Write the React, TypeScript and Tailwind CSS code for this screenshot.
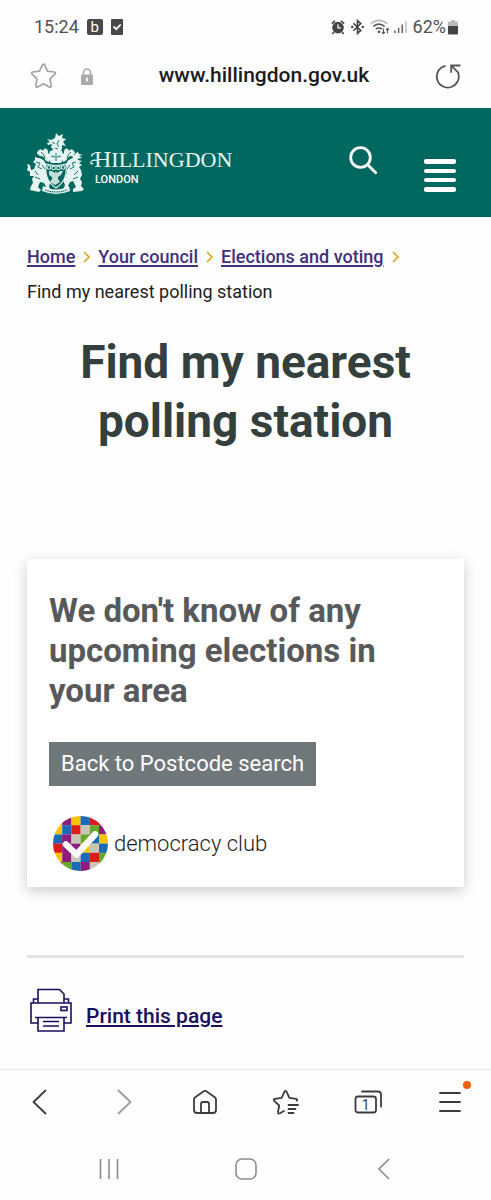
const breadcrumbs = ['Home', 'Your council', 'Elections and voting'];

const mosaic = [
  ['#f8c300', '#8e1b7e', '#f8c300', '#1b6ab8', '#dc1b1b', '#dc1b1b'],
  ['#f8c300', '#1b6ab8', '#dc1b1b', '#c9c6b6', '#6aa82c', '#8e1b7e'],
  ['#1b6ab8', '#8e1b7e', '#c9c6b6', '#6aa82c', '#1b6ab8', '#f8c300'],
  ['#dc1b1b', '#8e1b7e', '#8e1b7e', '#f8c300', '#c9c6b6', '#1b6ab8'],
  ['#f8c300', '#8e1b7e', '#c9c6b6', '#1b6ab8', '#dc1b1b', '#6aa82c'],
  ['#8e1b7e', '#6aa82c', '#1b6ab8', '#8e1b7e', '#c9c6b6', '#6aa82c'],
];

function StatusBar() {
  return (
    <div className="flex h-[54px] items-center justify-between pl-[34px] pr-[33px] text-[#505050]">
      <div className="flex items-center gap-2">
        <span className="text-[18px] leading-6">15:24</span>
        <span className="flex h-4 w-4 items-center justify-center rounded-xs bg-[#484848] text-[15px] leading-4 text-white">b</span>
        <svg width="12" height="16" viewBox="0 0 12 16" aria-hidden="true">
          <rect width="12" height="16" rx="1" fill="#484848" />
          <path d="M2.5 7.5l2.7 2.7L9.7 5.5" fill="none" stroke="#fff" strokeWidth="1.8" />
        </svg>
      </div>
      <div className="flex items-center">
        <svg className="mr-1.5" width="14" height="15" viewBox="0 0 14 15" aria-hidden="true">
          <path d="M.8 3.6L4 .9M13.2 3.6L10 .9M3 12l-1.8 2M11 12l1.8 2" stroke="#444" strokeWidth="1.6" />
          <circle cx="7" cy="7.6" r="5.8" fill="#444" />
          <path d="M7 4.3v3.6h2.8" fill="none" stroke="#fff" strokeWidth="1.2" />
        </svg>
        <svg className="mr-1.5" width="13" height="16" viewBox="0 0 13 16" aria-hidden="true">
          <path d="M2.4 4.2l7.4 7.2-3.3 3V1.6l3.3 3-7.4 7.2" fill="none" stroke="#444" strokeWidth="1.6" />
          <circle cx="1.2" cy="8" r="1.2" fill="#444" />
          <circle cx="11.8" cy="8" r="1.2" fill="#444" />
        </svg>
        <svg className="mr-1" width="20" height="16" viewBox="0 0 20 16" fill="none" aria-hidden="true">
          <path d="M1 4.6C5.5.2 12.5.2 17 4.6" stroke="#bbb" strokeWidth="1.7" />
          <path d="M3.4 7.5c3.2-3.1 8-3.1 11.2 0M6 10.2c1.700-1.600 4.300-1.600 6 0" stroke="#555" strokeWidth="1.7" />
          <circle cx="9" cy="12.8" r="1.4" fill="#555" />
          <path d="M13.5 9.5v5M12 13l1.500 1.700L15 13M17.500 14.500v-5M16 11l1.500-1.700L19 11" stroke="#555" strokeWidth="1.1" />
        </svg>
        <svg className="mr-1.5" width="13" height="14" viewBox="0 0 13 14" aria-hidden="true">
          <path d="M1 10.5V13M4.6 8v5M8.2 4.5V13" stroke="#555" strokeWidth="1.4" />
          <path d="M12 1v12" stroke="#bbb" strokeWidth="1.4" />
        </svg>
        <span className="text-[18px] leading-6">62%</span>
        <svg className="ml-0.5" width="10" height="15" viewBox="0 0 10 15" aria-hidden="true">
          <path d="M3 0h4v1.500h2a1 1 0 0 1 1 1V7H0V2.500a1 1 0 0 1 1-1h2z" fill="#bbb" />
          <path d="M0 6h10v7.500a1 1 0 0 1-1 1H1a1 1 0 0 1-1-1z" fill="#444" />
        </svg>
      </div>
    </div>
  );
}

function AddressBar() {
  return (
    <div className="flex h-[54px] items-center pb-2.5 pl-[29px] pr-[30px]">
      <button type="button" aria-label="Add bookmark">
        <svg width="29" height="28" viewBox="0 0 29 28" fill="none" stroke="#a3a3a3" strokeWidth="1.7" strokeLinejoin="round">
          <path d="M13.3 3.2q1.200-2 2.400 0l2.700 6 6.800.8q2 .5.700 2.200l-5 4.600 1.300 6.900q0 2-1.900 1.400l-5.800-3.300-5.800 3.300q-1.900.6-1.900-1.400l1.300-6.900-5-4.600q-1.300-1.700.7-2.200l6.800-.8z" />
        </svg>
      </button>
      <button type="button" aria-label="Site security" className="ml-[23px]">
        <svg width="12" height="17" viewBox="0 0 12 17" aria-hidden="true">
          <path d="M2.5 7V4.5a3.5 3.5 0 0 1 7 0V7" fill="none" stroke="#aaa" strokeWidth="1.6" />
          <rect y="6.5" width="12" height="10.5" rx="1" fill="#aaa" />
          <path d="M6 9.5v4" stroke="#fff" strokeWidth="1.6" />
        </svg>
      </button>
      <input
        type="text"
        aria-label="Web address"
        defaultValue="www.hillingdon.gov.uk"
        className="min-w-0 flex-1 bg-transparent text-center text-[21px] font-medium text-[#1c1c1c] outline-none"
      />
      <button type="button" aria-label="Reload">
        <svg width="26" height="26" viewBox="0 0 26 26" fill="none" stroke="#555" strokeWidth="1.8">
          <path d="M10.5 2.8A11 11 0 1 0 23 9.5" />
          <path d="M16.2 9.8V2.500H25.500M16.500 2.800l7.300 7.400" />
        </svg>
      </button>
    </div>
  );
}

function Crest() {
  return (
    <svg width="58" height="62" viewBox="0 0 58 62" fill="#e6f4f1" aria-hidden="true">
      {/* eagle and helmet */}
      <path d="M27 19l-3-4 1-3-4 1-1-2 3-1-3-3 4 1 4-2 1-5 3 3 4-2-1 4 4 1-3 3 3 4-4-1v4l-2 3z" />
      <path d="M23 19q6-3 12 0l2 7-3 5H24l-3-5z" />
      {/* mantling */}
      <path d="M22 30c-5-1-5-7-8-6-2 1-2-2-4-2 0-4 4-6 6-3 1-4 5-3 5 1 0 2 2 2 2 5zM36 30c5-1 5-7 8-6 2 1 2-2 4-2 0-4-4-6-6-3-1-4-5-3-5 1 0 2-2 2-2 5z" />
      <path d="M45 23c3 1 4-3 6-3l1 2 4 1-4 1 3 2-5 1-3 3z" />
      {/* supporters */}
      <path d="M19 33c-1-5-5-7-8-7l-3-1 0 3-2 2 3 2-2 5-3 1-1-5-3-1 1 3-1 3 3 2v4l4 0-2 3 1 4-2 3-1 4 9 2 2-2-3-3 2-5 4 1 2 4-1 4 6 0-2-5 2-5-4-7z" />
      <path d="M39 33c1-5 5-7 8-7l3-1 1 3 4 1-3 2 3 2-3 2 2 3 1 5-2 4 2 3-1 4 3 3-2 2-9 1 0-3 3-2-3-6-3 1-2 4 1 4-6 0 2-5-2-5 4-7z" />
      {/* shield with chain and eagle */}
      <path d="M19 32q10 3 20 0c1 11-1 18-10 24-9-6-11-13-10-24z" fill="#00685e" stroke="#e6f4f1" strokeWidth="1.2" />
      <path d="M22 39h3l3 2 1-2 1 2 3-2h3l-2 4-3 2v2l2 3-5 3-5-3 2-3v-2l-3-2z" opacity=".85" />
      <g fill="none" stroke="#e6f4f1" strokeWidth="1.1">
        <circle cx="22" cy="35.5" r="1.800" />
        <circle cx="26.600" cy="36" r="1.800" />
        <circle cx="31.400" cy="36" r="1.800" />
        <circle cx="36" cy="35.500" r="1.800" />
      </g>
      <g fill="none" stroke="#00685e" strokeWidth=".9">
        <path d="M24 24l4 1M34 24l-4 1M29 21v8M25 10l3 2M32 8l-2 4 2 3M28 16l3 1" />
        <path d="M14 20l3 3 1 4M44 20l-3 3-1 4M9 30l4 1-2 4 4 2M49 30l-4 1 2 4-4 2M8 45l5 2M51 45l-5 2M8 39l3 4M51 39l-4 4M15 33l3 4M43 33l-3 4" />
      </g>
      {/* motto ribbon */}
      <path d="M16 54q13 7 26 0l1 5q-14 6-28 0z" />
      <path d="M18 58q11 4 22 0" fill="none" stroke="#00685e" strokeWidth="1.2" strokeDasharray="1.5 .8" />
    </svg>
  );
}

function SiteHeader() {
  return (
    <header className="flex h-[109px] items-center justify-between bg-[#00685e] pl-[27px] pr-[35px] text-white">
      <a href="#" className="flex items-center" aria-label="Hillingdon London">
        <Crest />
        <span className="relative ml-[9px] block pt-2">
          <svg className="absolute -left-1 top-3.5" width="16" height="14" viewBox="0 0 16 14" fill="none" stroke="#e8f5f2" strokeWidth="1.2" aria-hidden="true">
            <path d="M5 1C3 0 1 2 2 3.5M7 7.500C3 6.500 0 8 1 10.500c1 1 2 0 2-.5" />
          </svg>
          <span className="block font-['Liberation_Serif',serif] text-[22px] leading-6 text-[#e8f5f2]">
            <span className="text-2xl leading-6">H</span>ILLINGDON
          </span>
          <span className="block pt-0.5 pl-px text-[11px] leading-3 font-medium">LONDON</span>
        </span>
      </a>
      <div className="flex items-center gap-[46px]">
        <button type="button" aria-label="Search" className="pb-1">
          <svg width="29" height="29" viewBox="0 0 29 29" fill="none" stroke="#fff" strokeWidth="2.8" strokeLinecap="round">
            <circle cx="11.5" cy="11.5" r="9.8" />
            <path d="M18.7 18.7l8 8" />
          </svg>
        </button>
        <button type="button" aria-label="Menu" className="flex w-8 flex-col gap-[5px] pt-[26px]">
          <span className="h-[5px] w-full rounded-xs bg-white" />
          <span className="h-1 w-full rounded-xs bg-white" />
          <span className="h-1 w-full rounded-xs bg-white" />
          <span className="h-[5px] w-full rounded-xs bg-white" />
        </button>
      </div>
    </header>
  );
}

function Breadcrumbs() {
  return (
    <nav aria-label="Breadcrumb" className="pt-[22px]">
      <ol className="flex flex-wrap items-center text-[18px] leading-[35px]">
        {breadcrumbs.map((item) => (
          <li key={item} className="flex items-center">
            <a href="#" className="font-medium text-[#42307d] underline decoration-2 underline-offset-2">{item}</a>
            <svg className="mx-2" width="7" height="12" viewBox="0 0 7 12" fill="none" stroke="#e0a620" strokeWidth="1.6" aria-hidden="true">
              <path d="M1 1l5 5-5 5" />
            </svg>
          </li>
        ))}
        <li className="text-[#1d1d1d]">Find my nearest polling station</li>
      </ol>
    </nav>
  );
}

function DemocracyClubLogo() {
  return (
    <svg width="55" height="55" viewBox="0 0 55 55" aria-hidden="true">
      <clipPath id="badge">
        <circle cx="27.5" cy="27.5" r="27.5" />
      </clipPath>
      <g clipPath="url(#badge)">
        {mosaic.map((row, y) =>
          row.map((fill, x) => (
            <rect key={`${x}-${y}`} x={x * 9.2} y={y * 9.2} width="9.3" height="9.3" fill={fill} />
          ))
        )}
      </g>
      <path d="M13 28.500L23.500 38.500 42 18.500" fill="none" stroke="#fff" strokeWidth="6.5" strokeLinecap="round" strokeLinejoin="round" />
    </svg>
  );
}

function PrinterIcon() {
  return (
    <svg width="42" height="44" viewBox="0 0 42 44" fill="none" stroke="#1a0f5c" strokeWidth="1.6" aria-hidden="true">
      <path d="M8 15V1.500h21.500L34 6v9" />
      <path d="M8 35H1V15h40v20h-7M3.500 15v-4H8M38.500 15v-4H34" />
      <path d="M5 29.500h32M8 29.500V43h26V29.500M13 33.500h16M13 38h16" />
      <rect x="31" y="19" width="6" height="3.5" />
    </svg>
  );
}

function BrowserToolbar() {
  return (
    <nav aria-label="Browser" className="grid h-[65px] grid-cols-6 place-items-center border-t border-[#e4e4e4] text-[#3c3c3c]">
      <button type="button" aria-label="Back">
        <svg width="26" height="26" viewBox="0 0 26 26" fill="none" stroke="currentColor" strokeWidth="1.8" strokeLinecap="round" strokeLinejoin="round">
          <path d="M17.500 1.500L5.500 13l12 11.500" />
        </svg>
      </button>
      <button type="button" aria-label="Forward" className="text-[#9c9c9c]">
        <svg width="26" height="26" viewBox="0 0 26 26" fill="none" stroke="currentColor" strokeWidth="1.8" strokeLinecap="round" strokeLinejoin="round">
          <path d="M8.500 1.500l12 11.500-12 11.500" />
        </svg>
      </button>
      <button type="button" aria-label="Home page">
        <svg width="24" height="24" viewBox="0 0 24 24" fill="none" stroke="currentColor" strokeWidth="1.8" strokeLinejoin="round">
          <path d="M1 9.500Q1 8 2.200 7.200L10.700 1.300q1.300-.8 2.600 0l8.500 5.900Q23 8 23 9.500V20q0 3-3 3H4q-3 0-3-3z" />
          <path d="M8 23V14q0-2 2-2h4q2 0 2 2v9" />
        </svg>
      </button>
      <button type="button" aria-label="Bookmarks">
        <svg width="28" height="26" viewBox="0 0 28 26" fill="none" stroke="currentColor" strokeWidth="1.8" strokeLinecap="round" strokeLinejoin="round">
          <path d="M12 22L8 24.200q-2.200 1-2-1.200l1.200-6.500-5-4.600Q.8 10.300 3 9.800l6.600-.9 2.800-6q1.100-2 2.200 0l2.800 6 6.600.9q1.800.6.800 1.800" />
          <path d="M16.500 16H26M16.500 20H23.500M16.500 24H21.500" />
        </svg>
      </button>
      <button type="button" aria-label="Tabs">
        <svg width="28" height="24" viewBox="0 0 28 24" fill="none" stroke="currentColor" strokeWidth="1.8">
          <rect x="1.5" y="6.5" width="20.5" height="16" rx="2.5" />
          <path d="M8 1.500h16q3 0 3 3V16.500" strokeLinecap="round" />
          <text x="11.8" y="19.5" textAnchor="middle" fontSize="14" fill="currentColor" stroke="none">1</text>
        </svg>
      </button>
      <button type="button" aria-label="More options" className="relative">
        <svg width="22" height="22" viewBox="0 0 22 22" fill="none" stroke="currentColor" strokeWidth="1.8" strokeLinecap="round">
          <path d="M1 2h20M1 11h20M1 20h20" />
        </svg>
        <span className="absolute -right-2.5 -top-2.5 h-2 w-2 rounded-full bg-[#f2600c]" />
      </button>
    </nav>
  );
}

function SystemNavigation() {
  return (
    <nav aria-label="System" className="grid h-[66px] grid-cols-3 place-items-center px-10 pt-1 text-[#8c8c8c]">
      <button type="button" aria-label="Recent apps">
        <svg width="22" height="22" viewBox="0 0 22 22" stroke="currentColor" strokeWidth="1.6">
          <path d="M2.500 1v20M11 1v20M19.500 1v20" />
        </svg>
      </button>
      <button type="button" aria-label="Home screen">
        <svg width="22" height="22" viewBox="0 0 22 22" fill="none" stroke="currentColor" strokeWidth="1.6">
          <rect x="1" y="1" width="20" height="20" rx="6" />
        </svg>
      </button>
      <button type="button" aria-label="System back">
        <svg width="14" height="24" viewBox="0 0 14 24" fill="none" stroke="currentColor" strokeWidth="1.6">
          <path d="M13 2L3 12l10 10" />
        </svg>
      </button>
    </nav>
  );
}

export default function App() {
  return (
    <div className="flex min-h-screen flex-col bg-[#fefefe] font-['Roboto',sans-serif]">
      <StatusBar />
      <AddressBar />
      <SiteHeader />

      <main className="flex-1 px-[27px]">
        <Breadcrumbs />

        <h1 className="mx-auto mt-6 max-w-sm text-center text-[46px] leading-[59px] font-bold text-[#343f3e]">
          Find my nearest polling station
        </h1>

        <section className="mt-[108px] rounded-xs bg-white px-[22px] pt-8 pb-4 shadow-[0_4px_14px_rgba(0,0,0,0.2)]">
          <h2 className="text-[33px] leading-10 font-bold text-[#58595b]">
            We don't know of any upcoming elections in your area
          </h2>
          <a href="#" className="mt-[31px] inline-block bg-[#6f777b] px-3 text-[22px] leading-[44px] text-white">
            Back to Postcode search
          </a>
          <a href="#" className="mt-[30px] ml-1 flex items-center gap-1.5 text-[22px] font-light text-[#1d1d1d]">
            <DemocracyClubLogo />
            democracy club
          </a>
        </section>

        <hr className="mt-[68px] border-t-3 border-[#e4e4e4]" />

        <a href="#" className="mt-[30px] mb-8 ml-[3px] flex items-center gap-3.5 text-[#1a0f5c]">
          <PrinterIcon />
          <span className="pt-3 text-[21px] leading-7 font-medium underline decoration-2 underline-offset-2">Print this page</span>
        </a>
      </main>

      <BrowserToolbar />
      <SystemNavigation />
    </div>
  );
}
